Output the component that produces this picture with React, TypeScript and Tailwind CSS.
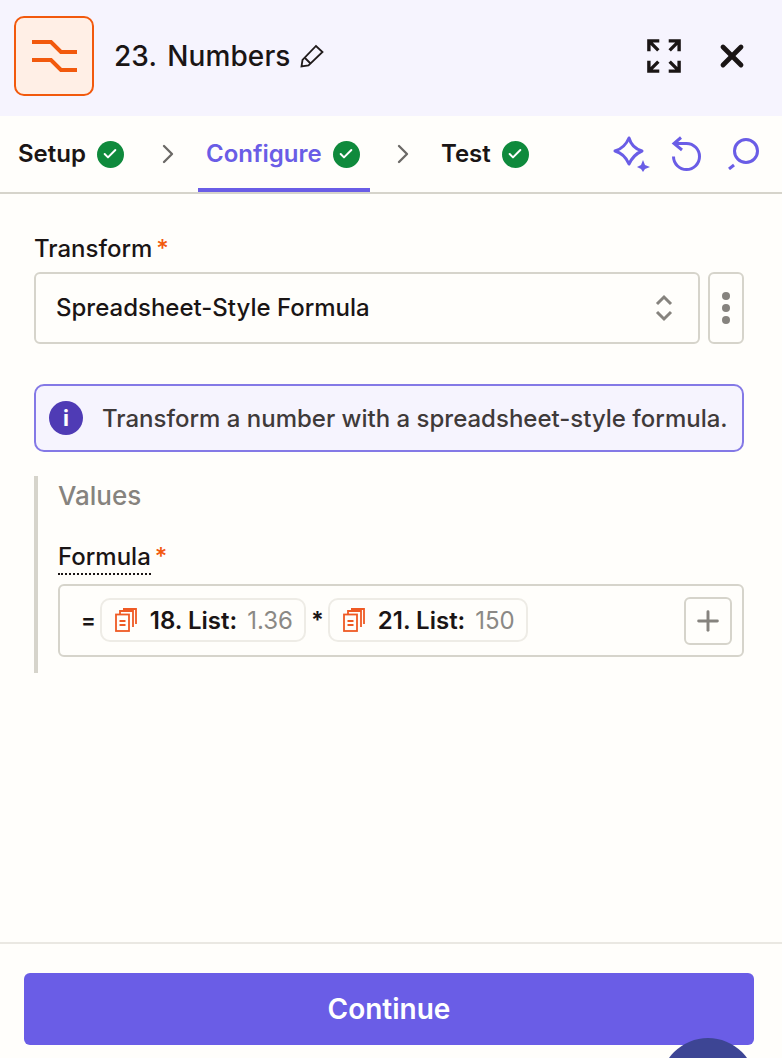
import { Check, ChevronRight, Plus, X } from "lucide-react";

function StatusCheck() {
  return (
    <span className="flex h-[27px] w-[27px] items-center justify-center rounded-full bg-[#0f8a3c]">
      <Check className="h-[16px] w-[16px] text-white" strokeWidth={3} />
    </span>
  );
}

function Divider() {
  return <ChevronRight className="h-[32px] w-[32px] text-[#6b6966]" strokeWidth={1.75} />;
}

function AppIcon() {
  return (
    <div className="flex h-[80px] w-[80px] items-center justify-center rounded-[10px] border-2 border-[#f2590d] bg-[#ffefe6]">
      <svg width="46" height="34" viewBox="0 0 46 34" fill="none" stroke="#f2590d" strokeWidth="4">
        <path d="M1 3 H20 L30 13 H46" />
        <path d="M1 21 H20 L30 31 H46" />
      </svg>
    </div>
  );
}

function Pencil() {
  return (
    <svg width="24" height="24" viewBox="0 0 24 24" fill="none" stroke="#1f1a1a" strokeWidth="1.8">
      <path d="M1.5 22.5 L2.5 16 L16 2 L22.5 8 L8.5 21.5 Z" />
      <path d="M5 14 L10.5 19.5" />
    </svg>
  );
}

function ExpandIcon() {
  return (
    <svg width="34" height="34" viewBox="0 0 36 36" fill="none" stroke="#1a1515" strokeWidth="3.6">
      <path d="M2 13 V2 H13 M2.5 2.5 L12 12" />
      <path d="M23 2 H34 V13 M33.5 2.5 L24 12" />
      <path d="M2 23 V34 H13 M2.5 33.5 L12 24" />
      <path d="M34 23 V34 H23 M33.5 33.5 L24 24" />
    </svg>
  );
}

function SparkleIcon() {
  return (
    <svg width="38" height="36" viewBox="0 0 38 36" fill="none" stroke="#6a5de6" strokeWidth="3">
      <path d="M16 2 C18 9 22 13 29 15 C24 17 20 20 16 28 C13 21 9 17 2 15 C9 13 13 9 16 2 Z" strokeLinejoin="round" />
      <path d="M30 24 L32 29 L37 31 L32 33 L30 36 L28 33 L24 31 L28 29 Z" fill="#6a5de6" stroke="none" />
    </svg>
  );
}

function UndoIcon() {
  return (
    <svg width="32" height="36" viewBox="0 0 32 36" fill="none" stroke="#6a5de6" strokeWidth="3">
      <path d="M3 7.5 H15.5 A13 13 0 1 1 2.5 20.5" />
      <path d="M10 1.5 L3 7.5 L11 14" />
    </svg>
  );
}

function SearchIcon() {
  return (
    <svg width="32" height="32" viewBox="0 0 32 32" fill="none" stroke="#6a5de6" strokeWidth="3">
      <circle cx="19" cy="13" r="11.5" />
      <path d="M7 27 L2 31" />
    </svg>
  );
}

function ListIcon() {
  return (
    <svg width="22" height="24" viewBox="0 0 22 24" fill="none" stroke="#ef5a24" strokeWidth="1.8">
      <rect x="1" y="6.5" width="13" height="16.5" />
      <path d="M5 6 V3 H18 V19 M8 1 H21 V16" />
      <path d="M4.5 13 H10.5 M4.5 17 H10.5" />
    </svg>
  );
}

function Pill({ name, value }: { name: string; value: string }) {
  return (
    <span className="mb-[2px] flex h-[44px] items-center gap-[13px] rounded-[10px] border-2 border-[#eeece6] pl-[13px] pr-[11px]">
      <ListIcon />
      <span className="flex items-center gap-[10px] pt-[2px] text-[24px]">
        <span className="font-semibold text-[#1a1515]">{name}</span>
        <span className="text-[#8b8985]">{value}</span>
      </span>
    </span>
  );
}

export default function App() {
  return (
    <div className="relative flex h-[1058px] w-[782px] flex-col overflow-hidden bg-[#fffefb] font-['Inter',sans-serif] text-[#1a1515]">
      <header className="flex h-[116px] items-center bg-[#f6f4fe] pb-[4px] pl-[14px] pr-[32px]">
        <AppIcon />
        <h1 className="ml-[20px] text-[28px] font-medium tracking-[0.1px] [word-spacing:3px]">23. Numbers</h1>
        <span className="ml-[9px]">
          <Pencil />
        </span>
        <div className="ml-auto flex items-center gap-[33px]">
          <ExpandIcon />
          <X className="h-[36px] w-[36px]" strokeWidth={3.2} />
        </div>
      </header>

      <nav className="flex h-[78px] items-center border-b-2 border-[#d6d4cb] pl-[18px] pr-[23px]">
        <div className="flex items-center gap-[11px]">
          <span className="text-[24px] font-semibold">Setup</span>
          <StatusCheck />
        </div>
        <span className="ml-[28px]">
          <Divider />
        </span>
        <div className="relative ml-[14px] flex h-full w-[172px] items-center gap-[11px] px-[8px]">
          <span className="text-[24px] font-semibold text-[#6a5de6]">Configure</span>
          <StatusCheck />
          <span className="absolute bottom-0 left-0 right-0 h-[4px] bg-[#6a5de6]" />
        </div>
        <span className="ml-[17px]">
          <Divider />
        </span>
        <div className="ml-[22px] flex items-center gap-[11px]">
          <span className="text-[24px] font-semibold">Test</span>
          <StatusCheck />
        </div>
        <div className="ml-auto flex items-center">
          <SparkleIcon />
          <span className="ml-[20px]">
            <UndoIcon />
          </span>
          <span className="ml-[24px]">
            <SearchIcon />
          </span>
        </div>
      </nav>

      <main className="flex flex-1 flex-col pl-[34px] pr-[38px] pt-[41px]">
        <label className="text-[24px] font-medium leading-[28px]">
          Transform<span className="ml-[4px] text-[#f2590d]">*</span>
        </label>
        <div className="mt-[9px] flex gap-[8px]">
          <div className="flex h-[72px] flex-1 items-center justify-between rounded-[6px] border-2 border-[#d6d4cb] pl-[20px] pr-[24px]">
            <span className="text-[24px] font-medium">Spreadsheet-Style Formula</span>
            <svg width="20" height="28" viewBox="0 0 20 28" fill="none" stroke="#86837e" strokeWidth="3">
              <path d="M3 10 L10 3 L17 10" />
              <path d="M3 18 L10 25 L17 18" />
            </svg>
          </div>
          <div className="flex h-[72px] w-[36px] flex-col items-center justify-center gap-[4px] rounded-[6px] border-2 border-[#d6d4cb]">
            <span className="h-[8px] w-[8px] rounded-full bg-[#86837e]" />
            <span className="h-[8px] w-[8px] rounded-full bg-[#86837e]" />
            <span className="h-[8px] w-[8px] rounded-full bg-[#86837e]" />
          </div>
        </div>

        <div className="mt-[40px] flex h-[68px] items-center gap-[19px] rounded-[10px] border-2 border-[#8479e6] bg-[#f6f4fe] pl-[13px]">
          <span className="flex h-[34px] w-[34px] items-center justify-center rounded-full bg-[#4f3bb5] text-[22px] font-bold text-white">
            i
          </span>
          <span className="whitespace-nowrap pt-[1px] text-[24px] font-medium text-[#3f3a3a]">
            Transform a number with a spreadsheet-style formula.
          </span>
        </div>

        <section className="mt-[24px] flex h-[197px] flex-col border-l-4 border-[#d6d4cb] pl-[20px]">
          <h2 className="mt-[5px] text-[26px] font-medium leading-[30px] text-[#86837e]">Values</h2>
          <div className="mt-[32px] text-[24px] font-medium leading-[28px]">
            <span className="border-b-2 border-dotted border-[#1a1515] pb-[2px]">Formula</span>
            <span className="ml-[4px] text-[#f2590d]">*</span>
          </div>
          <div className="mt-[13px] flex h-[73px] items-center rounded-[6px] border-2 border-[#d6d4cb] pl-[21px] pr-[10px]">
            <span className="mr-[4px] text-[22px] font-semibold">=</span>
            <Pill name="18. List:" value="1.36" />
            <span className="ml-[5px] mr-[4px] text-[23px] font-bold">*</span>
            <Pill name="21. List:" value="150" />
            <span className="ml-auto flex h-[48px] w-[48px] items-center justify-center rounded-[6px] border-2 border-[#d6d4cb]">
              <Plus className="h-[32px] w-[32px] text-[#86837e]" strokeWidth={2.2} />
            </span>
          </div>
        </section>
      </main>

      <footer className="flex h-[116px] border-t-2 border-[#eae8e2] pl-[24px] pr-[28px] pt-[29px]">
        <button className="flex h-[72px] w-full items-center justify-center rounded-[6px] bg-[#6a5de6] text-[28px] font-semibold text-white">
          Continue
        </button>
      </footer>

      <div className="absolute left-[660px] top-[1038px] h-[96px] w-[96px] rounded-full bg-[#3d4594]" />
    </div>
  );
}
